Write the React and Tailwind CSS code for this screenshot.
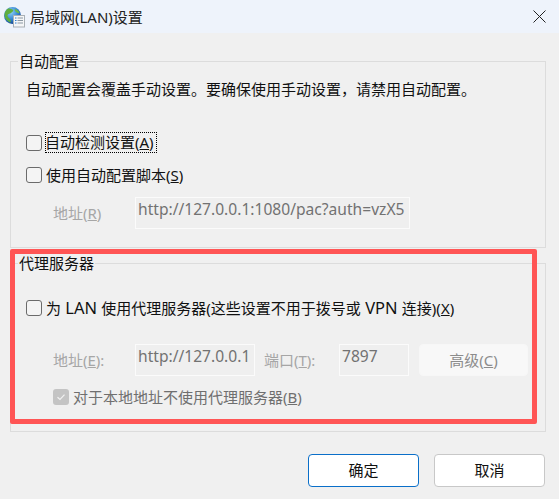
const FONT = "font-['Noto_Sans','Noto_Sans_CJK_SC',sans-serif]";

function Globe() {
  return (
    <svg width="22" height="22" viewBox="0 0 22 22" className="shrink-0">
      <defs>
        <radialGradient id="g" cx="40%" cy="30%" r="75%">
          <stop offset="0" stopColor="#8fd3f5" />
          <stop offset="0.6" stopColor="#2f7fd0" />
          <stop offset="1" stopColor="#123f86" />
        </radialGradient>
      </defs>
      <circle cx="9.5" cy="9.5" r="8.5" fill="url(#g)" />
      <path d="M5 2.5c2 0 4 .5 5 1.5s-1 2-2 3-3 .5-3.500 2S6 12 7 13s1 3 0 3.500C4 15 1.500 12 1.500 9c0-3 1.500-5 3.500-6.500z" fill="#5fae3f" />
      <path d="M12 3c2 .5 4 2 4.500 4-1 .5-2.500 0-3.500-1s-1.500-2-1-3z" fill="#6dba48" />
      <rect x="10.500" y="9.500" width="11" height="11.500" fill="#f5f6f7" stroke="#a9b0b5" strokeWidth="1" />
      <path d="M12 12h1.500M12 14.500h1.500M12 17h1.500" stroke="#2f7fd0" strokeWidth="1.200" />
      <path d="M14.500 12H20M14.500 14.500H20M14.500 17H20" stroke="#8b98a3" strokeWidth="1" />
    </svg>
  );
}

function Box({ checked }) {
  if (checked) {
    return (
      <span className="flex h-4 w-4 shrink-0 items-center justify-center rounded-[3px] bg-[#c4c4c4]">
        <svg width="10" height="10" viewBox="0 0 10 10" fill="none">
          <path d="M1.500 5.200 4 7.500 8.500 2.700" stroke="#f2f2f2" strokeWidth="1.200" />
        </svg>
      </span>
    );
  }
  return <span className="h-4 w-4 shrink-0 rounded-[3px] border border-[#6b6b6b] bg-[#f4f4f4]" />;
}

function Field({ children, className }) {
  return (
    <div className={`h-8 shrink-0 border border-[#fbfbfb] bg-[#efefef] pl-[2px] text-[15.6px] leading-[22px] text-[#727272] ${className}`}>
      {children}
    </div>
  );
}

export default function App() {
  return (
    <div className={`relative h-[499px] w-[559px] overflow-hidden bg-[#f0f0f0] text-[15px] text-[#111] ${FONT}`}>
      <header className="flex h-[33px] items-center bg-[#eef3fb] pl-[3px] pr-[13px]">
        <Globe />
        <h1 className="ml-[5px] flex-1 text-[15px] font-normal leading-5 text-[#222]">局域网(LAN)设置</h1>
        <svg width="13" height="13" viewBox="0 0 13 13" fill="none">
          <path d="M.5.5l12 12M12.500.5l-12 12" stroke="#222" strokeWidth="1" />
        </svg>
      </header>

      <main className="px-[10px] pt-[18px]">
        <fieldset className="h-[197px] w-[536px] border border-[#dcdcdc] pl-[15px]">
          <legend className="-ml-[8px] h-5 px-[1px] leading-5">自动配置</legend>
          <p className="mt-2 leading-5">自动配置会覆盖手动设置。要确保使用手动设置，请禁用自动配置。</p>

          <div className="mt-[33px] flex h-[21px] items-center">
            <Box />
            <span className="ml-[3px] border border-dotted border-black pr-[2px] leading-[19px] [text-indent:-1px]">
              自动检测设置(<span className="underline">A</span>)
            </span>
          </div>

          <div className="mt-3 flex h-5 items-center gap-1">
            <Box />
            <span>使用自动配置脚本(<span className="underline">S</span>)</span>
          </div>

          <div className="mt-3 flex items-center pl-[27px]">
            <span className="w-[82px] pt-[1px] text-[#a6a6a6]">地址(<span className="underline">R</span>)</span>
            <Field className="w-[275px]">http://127.0.0.1:1080/pac?auth=vzX5</Field>
          </div>
        </fieldset>

        <fieldset className="mt-[5px] h-[179px] w-[536px] border border-[#dcdcdc] pl-[15px]">
          <legend className="-ml-[8px] h-5 px-[1px] leading-5">代理服务器</legend>

          <div className="mt-[25px] flex h-5 items-center gap-1">
            <Box />
            <span>
              为<span className="text-[16.5px]"> LAN </span>使用代理服务器(这些设置不用于拨号或<span className="text-[16.5px]"> VPN </span>连接)(<span className="underline">X</span>)
            </span>
          </div>

          <div className="mt-[26px] flex items-center pl-[27px]">
            <span className="w-[82px] text-[#a6a6a6]">地址(<span className="underline">E</span>):</span>
            <Field className="w-[120px]">http://127.0.0.1</Field>
            <span className="ml-[9px] w-[75px] text-[#a6a6a6]">端口(<span className="underline">T</span>):</span>
            <Field className="w-[70px]">7897</Field>
            <button className="ml-[10px] h-8 w-[109px] rounded-[4px] border border-[#f7f7f7] bg-[#f8f8f8] text-[#8c8c8c]">
              高级(<span className="underline">C</span>)
            </button>
          </div>

          <div className="mt-[11px] flex h-5 items-center gap-1 pl-[27px] text-[#6f6f6f]">
            <Box checked />
            <span>对于本地地址不使用代理服务器(<span className="underline">B</span>)</span>
          </div>
        </fieldset>

        <footer className="mt-[22px] flex justify-end gap-[15px] pr-[4px]">
          <button className="h-[33px] w-[111px] rounded-[4px] border border-[#0a6fc9] bg-white">确定</button>
          <button className="h-[33px] w-[111px] rounded-[4px] border border-[#c8c8c8] bg-white">取消</button>
        </footer>
      </main>

      <div className="pointer-events-none absolute left-[10px] top-[249px] h-[175px] w-[527px] rounded-[2px] border-[5px] border-[#ff5555]" />
    </div>
  );
}
